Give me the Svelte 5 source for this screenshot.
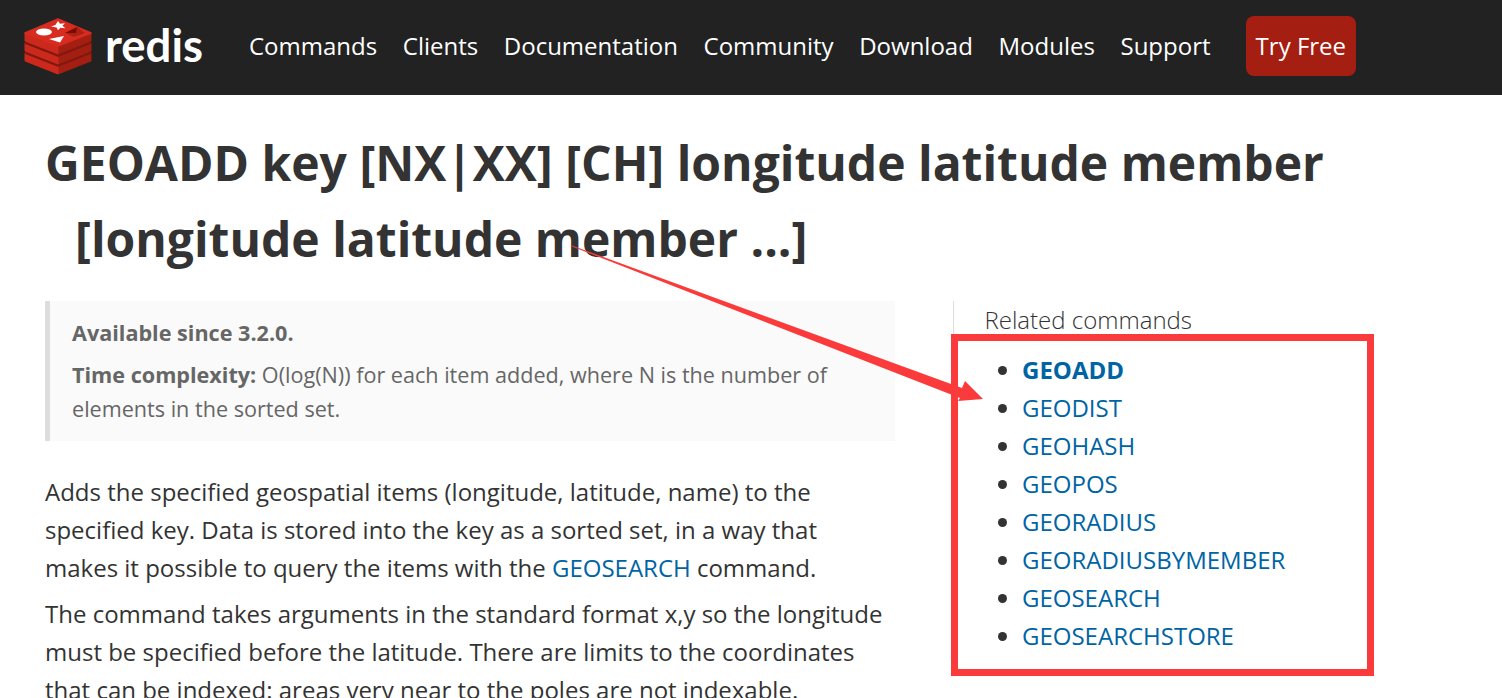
<script>
  const navLinks = ['Commands', 'Clients', 'Documentation', 'Community', 'Download', 'Modules', 'Support'];
  const related = ['GEOADD', 'GEODIST', 'GEOHASH', 'GEOPOS', 'GEORADIUS', 'GEORADIUSBYMEMBER', 'GEOSEARCH', 'GEOSEARCHSTORE'];
  // logo slabs, bottom one first
  const slabs = [20, 10, 0];
</script>

<div class="page">
  <header class="nav">
    <a class="logo" href="#top">
      <svg width="68" height="60" viewBox="0 0 68 60">
        {#each slabs as dy}
          <g transform="translate(0 {dy})">
            <path d="M34 28 67 15 67 23 34 36z" fill="#a41e11" stroke="#a41e11" stroke-width="1" stroke-linejoin="round" />
            <path d="M1 15 34 28 34 36 1 23z" fill="#cc281c" stroke="#cc281c" stroke-width="1" stroke-linejoin="round" />
            <path d="M1 15 34 1 67 15 34 28z" fill={dy === 0 ? '#d82c20' : '#7f1a10'} stroke={dy === 0 ? '#d82c20' : '#7f1a10'} stroke-width="1.500" stroke-linejoin="round" />
          </g>
        {/each}
        <ellipse cx="20" cy="14" rx="8" ry="3.500" fill="#fff" />
        <path d="M34 3l2 2.800 5-.6-2.600 2.600 3 2.500-5-.6-2.400 2.600-1.400-2.900-5.600-.8 4.400-1.700z" fill="#fff" />
        <path d="M25 21 40 18 36 24.500z" fill="#fff" />
        <path d="M41 15 53 9 61 15 50 19z" fill="#ad2115" />
        <path d="M41 15 53 9 52 15z" fill="#7a0c00" />
      </svg>
      <span class="wordmark">redis</span>
    </a>
    <nav class="links">
      {#each navLinks as link}
        <a href="#top">{link}</a>
      {/each}
      <a class="try" href="#top">Try Free</a>
    </nav>
  </header>

  <main class="content">
    <h1>GEOADD key [NX|XX] [CH] longitude latitude member [longitude latitude member ...]</h1>
    <div class="columns">
      <article class="article">
        <div class="metadata">
          <p><strong>Available since 3.2.0.</strong></p>
          <p><strong>Time complexity:</strong> O(log(N)) for each item added, where N is the number of elements in the sorted set.</p>
        </div>
        <p>Adds the specified geospatial items (longitude, latitude, name) to the specified key. Data is stored into the key as a sorted set, in a way that makes it possible to query the items with the <a href="#top">GEOSEARCH</a> command.</p>
        <p>The command takes arguments in the standard format x,y so the longitude must be specified before the latitude. There are limits to the coordinates that can be indexed: areas very near to the poles are not indexable.</p>
      </article>
      <aside class="aside">
        <h2>Related commands</h2>
        <ul>
          {#each related as cmd, i}
            <li><a href="#top" class:current={i === 0}>{cmd}</a></li>
          {/each}
        </ul>
      </aside>
    </div>
  </main>

  <svg class="markup" width="1502" height="698" viewBox="0 0 1502 698">
    <path d="M572 245.500 962 388 965 381 983 399 958 401 960 398 572 246.500z" fill="#fb3b3b" />
    <rect x="954.500" y="337.500" width="416" height="335" fill="none" stroke="#fb3b3b" stroke-width="7" />
  </svg>
</div>

<style>
  :global(body) {
    margin: 0;
    overflow: hidden;
    background: #fff;
  }

  .page {
    position: relative;
    height: 698px;
    overflow: hidden;
    font-family: "Open Sans", sans-serif;
    font-size: 24px;
    line-height: 38px;
    color: #333;
  }

  a {
    color: #0064a4;
    text-decoration: none;
  }

  .nav {
    height: 95px;
    background: #222;
    display: flex;
    align-items: center;
    padding-left: 24px;
  }

  .logo {
    display: flex;
    align-items: center;
    gap: 13px;
    width: 225px;
  }

  .logo svg {
    flex: none;
  }

  .wordmark {
    font-family: Lato, sans-serif;
    font-size: 45.500px;
    font-weight: 700;
    line-height: 50px;
    color: #fff;
    margin-top: -5px;
  }

  .links {
    display: flex;
    align-items: center;
    gap: 25.600px;
    margin-top: -3px;
  }

  .links a {
    color: #fff;
  }

  .links .try {
    background: #a41e11;
    border-radius: 8px;
    padding: 11px 9.500px;
    margin-left: 10px;
  }

  .content {
    padding: 30px 0 0 45px;
  }

  h1 {
    margin: 0 0 24px;
    padding-left: 30px;
    text-indent: -30px;
    width: 1290px;
    font-size: 48px;
    line-height: 76px;
    font-weight: 700;
    color: #333;
  }

  .columns {
    display: flex;
    align-items: flex-start;
  }

  .article {
    width: 850px;
    flex: none;
  }

  .article > p {
    margin: 0 0 8px;
  }

  .metadata {
    background: #fafafa;
    border-left: 5px solid #ddd;
    color: #666;
    font-size: 21.600px;
    line-height: 34px;
    padding: 15px 22px;
    margin-bottom: 32px;
  }

  .metadata p {
    margin: 0 0 8px;
  }

  .metadata p:last-child {
    margin: 0;
  }

  .aside {
    margin-left: 58px;
    border-left: 1px solid #ddd;
    padding-left: 30.500px;
  }

  h2 {
    margin: 0;
    font-size: 24px;
    line-height: 38px;
    font-weight: 300;
    color: #333;
  }

  ul {
    margin: 12px 0 0;
    padding-left: 37.500px;
  }

  .current {
    font-weight: 700;
  }

  .markup {
    position: absolute;
    left: 0;
    top: 0;
    pointer-events: none;
  }
</style>
